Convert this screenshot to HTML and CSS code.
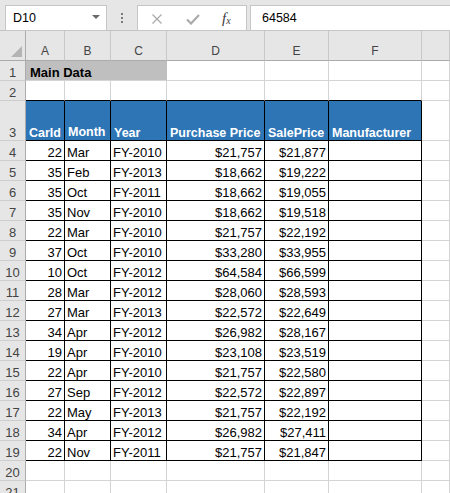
FILE: index.html
```html
<!DOCTYPE html>
<html>
<head>
<meta charset="utf-8">
<link rel="stylesheet" href="styles.css">
</head>
<body>
<div class="app">
  <div class="fbar">
    <div class="namebox"><span class="ref">D10</span><span class="drop"></span></div>
    <div class="dots"><i></i><i></i><i></i></div>
    <div class="fxbox">
      <svg class="ico-x" width="10" height="10" viewBox="0 0 10 10"><path d="M0.5 0.5L9.5 9.5M9.5 0.5L0.5 9.5" stroke="#ababab" stroke-width="1.3" fill="none"/></svg>
      <svg class="ico-ok" width="14" height="11" viewBox="0 0 14 11"><path d="M1 5.5L5 9.5L13 1" stroke="#ababab" stroke-width="2.2" fill="none"/></svg>
      <span class="fx"><i>f</i><sub>x</sub></span>
    </div>
    <div class="formula">64584</div>
  </div>
  <div class="sheet">
    <div class="row hdr">
      <div class="c corner"><svg width="11" height="11" viewBox="0 0 11 11"><polygon points="11,0 11,11 0,11" fill="#b4b4b4"/></svg></div>
      <div class="c ch">A</div><div class="c ch">B</div><div class="c ch">C</div><div class="c ch">D</div><div class="c ch">E</div><div class="c ch">F</div><div class="c ch"></div>
    </div>
    <div class="row">
      <div class="c rh">1</div><div class="c title">Main Data</div><div class="c"></div><div class="c"></div><div class="c"></div><div class="c"></div>
    </div>
    <div class="row">
      <div class="c rh">2</div><div class="c topb"></div><div class="c topb"></div><div class="c topb"></div><div class="c topb"></div><div class="c topb"></div><div class="c topb"></div><div class="c"></div>
    </div>
    <div class="row tall">
      <div class="c rh">3</div><div class="c th">CarId</div><div class="c th month">Month</div><div class="c th">Year</div><div class="c th">Purchase Price</div><div class="c th">SalePrice</div><div class="c th">Manufacturer</div><div class="c"></div>
    </div>
    <div class="row"><div class="c rh">4</div><div class="c d num">22</div><div class="c d">Mar</div><div class="c d">FY-2010</div><div class="c d num">$21,757</div><div class="c d num">$21,877</div><div class="c d"></div><div class="c"></div></div>
    <div class="row"><div class="c rh">5</div><div class="c d num">35</div><div class="c d">Feb</div><div class="c d">FY-2013</div><div class="c d num">$18,662</div><div class="c d num">$19,222</div><div class="c d"></div><div class="c"></div></div>
    <div class="row"><div class="c rh">6</div><div class="c d num">35</div><div class="c d">Oct</div><div class="c d">FY-2011</div><div class="c d num">$18,662</div><div class="c d num">$19,055</div><div class="c d"></div><div class="c"></div></div>
    <div class="row"><div class="c rh">7</div><div class="c d num">35</div><div class="c d">Nov</div><div class="c d">FY-2010</div><div class="c d num">$18,662</div><div class="c d num">$19,518</div><div class="c d"></div><div class="c"></div></div>
    <div class="row"><div class="c rh">8</div><div class="c d num">22</div><div class="c d">Mar</div><div class="c d">FY-2010</div><div class="c d num">$21,757</div><div class="c d num">$22,192</div><div class="c d"></div><div class="c"></div></div>
    <div class="row"><div class="c rh">9</div><div class="c d num">37</div><div class="c d">Oct</div><div class="c d">FY-2010</div><div class="c d num">$33,280</div><div class="c d num">$33,955</div><div class="c d"></div><div class="c"></div></div>
    <div class="row"><div class="c rh">10</div><div class="c d num">10</div><div class="c d">Oct</div><div class="c d">FY-2012</div><div class="c d num">$64,584</div><div class="c d num">$66,599</div><div class="c d"></div><div class="c"></div></div>
    <div class="row"><div class="c rh">11</div><div class="c d num">28</div><div class="c d">Mar</div><div class="c d">FY-2012</div><div class="c d num">$28,060</div><div class="c d num">$28,593</div><div class="c d"></div><div class="c"></div></div>
    <div class="row"><div class="c rh">12</div><div class="c d num">27</div><div class="c d">Mar</div><div class="c d">FY-2013</div><div class="c d num">$22,572</div><div class="c d num">$22,649</div><div class="c d"></div><div class="c"></div></div>
    <div class="row"><div class="c rh">13</div><div class="c d num">34</div><div class="c d">Apr</div><div class="c d">FY-2012</div><div class="c d num">$26,982</div><div class="c d num">$28,167</div><div class="c d"></div><div class="c"></div></div>
    <div class="row"><div class="c rh">14</div><div class="c d num">19</div><div class="c d">Apr</div><div class="c d">FY-2010</div><div class="c d num">$23,108</div><div class="c d num">$23,519</div><div class="c d"></div><div class="c"></div></div>
    <div class="row"><div class="c rh">15</div><div class="c d num">22</div><div class="c d">Apr</div><div class="c d">FY-2010</div><div class="c d num">$21,757</div><div class="c d num">$22,580</div><div class="c d"></div><div class="c"></div></div>
    <div class="row"><div class="c rh">16</div><div class="c d num">27</div><div class="c d">Sep</div><div class="c d">FY-2012</div><div class="c d num">$22,572</div><div class="c d num">$22,897</div><div class="c d"></div><div class="c"></div></div>
    <div class="row"><div class="c rh">17</div><div class="c d num">22</div><div class="c d">May</div><div class="c d">FY-2013</div><div class="c d num">$21,757</div><div class="c d num">$22,192</div><div class="c d"></div><div class="c"></div></div>
    <div class="row"><div class="c rh">18</div><div class="c d num">34</div><div class="c d">Apr</div><div class="c d">FY-2012</div><div class="c d num">$26,982</div><div class="c d num">$27,411</div><div class="c d"></div><div class="c"></div></div>
    <div class="row"><div class="c rh">19</div><div class="c d num">22</div><div class="c d">Nov</div><div class="c d">FY-2011</div><div class="c d num">$21,757</div><div class="c d num">$21,847</div><div class="c d"></div><div class="c"></div></div>
    <div class="row"><div class="c rh">20</div><div class="c"></div><div class="c"></div><div class="c"></div><div class="c"></div><div class="c"></div><div class="c"></div><div class="c"></div></div>
    <div class="row"><div class="c rh">21</div><div class="c"></div><div class="c"></div><div class="c"></div><div class="c"></div><div class="c"></div><div class="c"></div><div class="c"></div></div>
  </div>
</div>
</body>
</html>
```
FILE: styles.css
```css
html, body {
  margin: 0;
  padding: 0;
  background: #ffffff;
}
body {
  width: 450px;
  height: 493px;
  overflow: hidden;
  font-family: "Liberation Sans", Arial, sans-serif;
  font-size: 13px;
  color: #000;
}
.app {
  width: 450px;
}
.fbar {
  box-sizing: border-box;
  height: 31px;
  background: #e6e6e6;
  border-bottom: 1px solid #c4c4c4;
  display: flex;
  align-items: flex-start;
  padding: 5px 0 0 5px;
}
.namebox {
  box-sizing: border-box;
  width: 102px;
  height: 26px;
  background: #fff;
  border: 1px solid #c6c6c6;
  display: flex;
  align-items: center;
  justify-content: space-between;
  padding: 0 6px 0 7px;
  font-size: 12.5px;
}
.drop {
  width: 0;
  height: 0;
  border-left: 4px solid transparent;
  border-right: 4px solid transparent;
  border-top: 4px solid #6a6a6a;
  margin-top: -2px;
}
.dots {
  width: 30px;
  height: 26px;
  display: flex;
  flex-direction: column;
  align-items: center;
  justify-content: center;
  gap: 2px;
}
.dots i {
  display: block;
  width: 2px;
  height: 2px;
  background: #7a7a7a;
}
.fxbox {
  box-sizing: border-box;
  width: 110px;
  height: 26px;
  background: #fff;
  border: 1px solid #c6c6c6;
  display: flex;
  align-items: center;
  padding-left: 14px;
}
.ico-x {
  margin-top: 1px;
}
.ico-ok {
  margin-left: 24px;
  margin-top: 2px;
}
.fx {
  margin-left: 22px;
  font-family: "Liberation Serif", "Times New Roman", serif;
  font-style: italic;
  color: #3c3c3c;
  font-size: 15px;
  line-height: 1;
}
.fx i {
  font-style: italic;
}
.fx sub {
  font-size: 10px;
  vertical-align: baseline;
  position: relative;
  top: 1px;
}
.formula {
  box-sizing: border-box;
  flex: 1;
  margin-left: 3px;
  height: 26px;
  background: #fff;
  border: 1px solid #c6c6c6;
  border-right: none;
  display: flex;
  align-items: center;
  padding-left: 11px;
  font-size: 12.5px;
}
.sheet {
  width: 450px;
}
.row {
  display: grid;
  grid-template-columns: 26px 39px 46px 56px 98px 64px 93px 28px;
  height: 20px;
}
.row.hdr {
  height: 30px;
}
.row.tall {
  height: 40px;
}
.c {
  box-sizing: border-box;
  min-width: 0;
  border-right: 1px solid #d4d4d4;
  border-bottom: 1px solid #d4d4d4;
  display: flex;
  align-items: flex-end;
  line-height: 14px;
  padding: 0 2px;
  white-space: nowrap;
  overflow: hidden;
}
.hdr .c {
  background: #e6e6e6;
  border-bottom: 1px solid #ababab;
  border-right: 1px solid #c8c8c8;
}
.hdr .corner {
  justify-content: flex-end;
  padding: 0 3px 3px 0;
  border-right: 1px solid #ababab;
}
.hdr .corner svg {
  display: block;
}
.ch {
  justify-content: center;
  font-size: 12px;
  color: #444;
  padding-bottom: 2px;
}
.rh {
  background: #e6e6e6;
  justify-content: center;
  color: #444;
  border-right: 1px solid #ababab !important;
  border-bottom-color: #cdcdcd !important;
  padding: 0;
}
.title {
  grid-column: span 3;
  background: #bfbfbf;
  border-right-color: #bfbfbf;
  font-weight: bold;
  padding-left: 4px;
}
.topb {
  border-bottom-color: #000;
}
.th {
  background: #2e75b6;
  color: #fff;
  font-weight: bold;
  font-size: 12.5px;
  border-right-color: #000;
  border-bottom-color: #000;
  padding-left: 3px;
}
.th.month {
  padding-bottom: 1px;
}
.d {
  border-right-color: #000;
  border-bottom-color: #000;
}
.num {
  justify-content: flex-end;
}
```
